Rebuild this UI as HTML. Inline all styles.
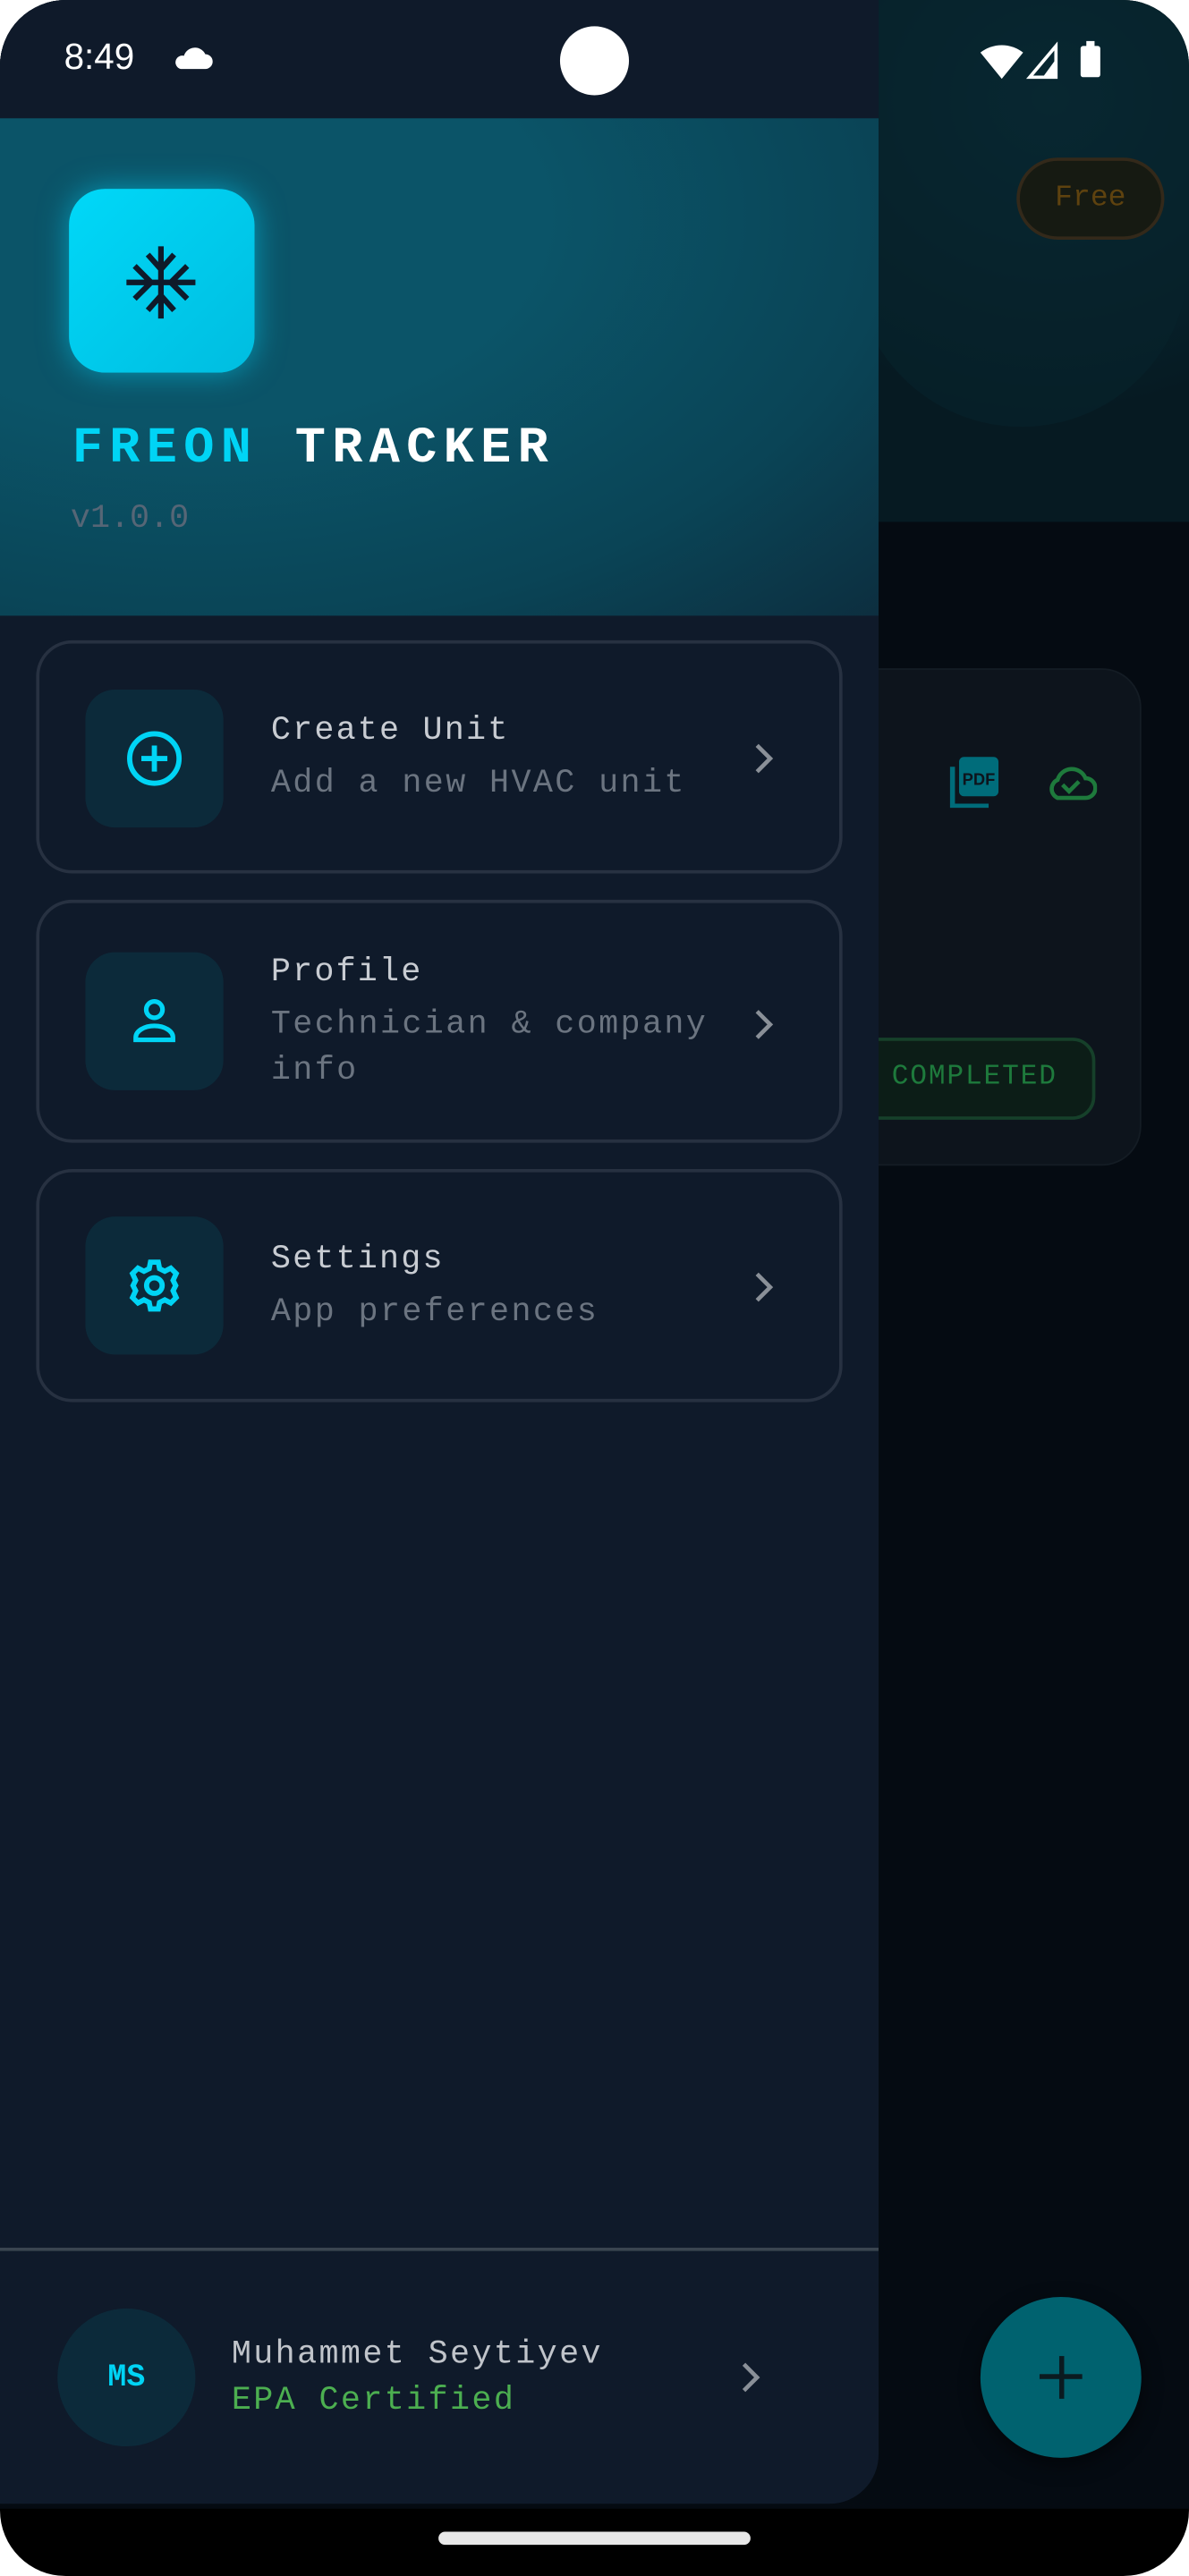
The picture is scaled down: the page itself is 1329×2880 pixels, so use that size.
<!DOCTYPE html>
<html><head><meta charset="utf-8"><style>
*{margin:0;padding:0;box-sizing:border-box}
html,body{width:1329px;height:2880px;background:#fff;overflow:hidden}
#s{position:absolute;left:0;top:0;width:724px;height:1569px;transform:scale(1.8356);transform-origin:0 0;background:#000;border-radius:40px;overflow:hidden;font-family:"Liberation Mono",monospace}
.a{position:absolute}
.card{position:absolute;left:22px;width:491px;border:2px solid #273141;border-radius:22px;background:#0f1a2a}
.ib{position:absolute;left:28px;width:84px;height:84px;border-radius:18px;background:#0c2a3a;display:flex;align-items:center;justify-content:center}
.t{position:absolute;left:141px;font-size:20px;color:#c8ccd2;letter-spacing:1.2px}
.st{position:absolute;left:141px;font-size:20px;color:#6b7480;letter-spacing:1.3px;line-height:28px}
.ch{position:absolute;left:433px}
</style></head><body>
<div id="s">
 <div class="a" style="left:0;top:0;width:724px;height:318px;background:radial-gradient(ellipse 260px 240px at 640px 60px,#0a3340,#061a22 80%)"></div>
 <div class="a" style="left:0;top:318px;width:724px;height:1210px;background:#050b12"></div>
 <div class="a" style="left:520px;top:0;width:204px;height:260px;border-radius:0 0 140px 140px;background:#07222b;opacity:.7"></div>
 <div class="a" style="left:619px;top:96px;width:90px;height:50px;border:2px solid #33291a;border-radius:25px;background:#161a12;color:#5e420f;font-size:18px;text-align:center;line-height:46px">Free</div>
 <div class="a" style="left:480px;top:407px;width:215px;height:303px;border-radius:24px;background:#0d141c;border:1px solid #141c24"></div>
 <svg class="a" style="left:578px;top:460px" width="32" height="32" viewBox="0 0 32 32"><rect x="6" y="1" width="24" height="24" rx="3" fill="#006c7a"/><path d="M2 7v24h22" stroke="#006c7a" stroke-width="3" fill="none"/><text x="18" y="18" font-size="10" font-weight="bold" text-anchor="middle" fill="#0d141c" font-family="Liberation Sans">PDF</text></svg>
 <svg class="a" style="left:636px;top:464px" width="32" height="26" viewBox="0 0 32 26"><path d="M8 22h17a6 6 0 0 0 0-12 9 9 0 0 0-17 1 6 6 0 0 0 0 11z" fill="none" stroke="#1e7a3c" stroke-width="2.5"/><path d="M11 14l4 4 6-6" fill="none" stroke="#1e7a3c" stroke-width="2.5"/></svg>
 <div class="a" style="left:500px;top:632px;width:167px;height:50px;border:2px solid #16402a;border-radius:14px;background:#0c1d17;color:#1e7a3c;font-size:17px;line-height:46px;padding-left:41px;letter-spacing:1px">COMPLETED</div>
 <div class="a" style="left:597px;top:1399px;width:98px;height:98px;border-radius:50%;background:#00626f;box-shadow:0 4px 12px rgba(0,0,0,.5)"></div>
 <div class="a" style="left:633px;top:1446px;width:26px;height:3px;background:#0b1a20"></div>
 <div class="a" style="left:645px;top:1435px;width:3px;height:26px;background:#0b1a20"></div>

 <div class="a" style="left:0;top:0;width:535px;height:1525px;background:#0f1a2a;border-radius:0 30px 30px 0;overflow:hidden">
  <div class="a" style="left:0;top:72px;width:535px;height:303px;background:radial-gradient(ellipse 700px 420px at 120px 60px,#0b5468 30%,#0a4456 60%,#0f1e2e 100%)"></div>
  <div class="a" style="left:42px;top:115px;width:113px;height:112px;border-radius:22px;background:linear-gradient(135deg,#00d8f8,#00bde0);box-shadow:0 0 18px rgba(0,210,245,.55)"></div>
  <svg class="a" style="left:74px;top:148px" width="48" height="48" viewBox="0 0 48 48" fill="none" stroke="#0f1a2a" stroke-width="3.4"><path d="M24 2v44M3 24h42M16 7l8 9 8-9M16 41l8-9 8 9M8 14l10 10-10 10M40 14L30 24l10 10"/></svg>
  <div class="a" style="left:44px;top:256px;font-size:31px;font-weight:bold;letter-spacing:4px;color:#fff;white-space:nowrap"><span style="color:#00d4f5">FREON</span> TRACKER</div>
  <div class="a" style="left:43px;top:305px;font-size:20px;color:#566676">v1.0.0</div>

  <div class="card" style="top:390px;height:142px">
   <div class="ib" style="top:28px"><svg width="38" height="38" viewBox="0 0 24 24"><circle cx="12" cy="12" r="9.5" fill="none" stroke="#00d4f5" stroke-width="2"/><path d="M12 7v10M7 12h10" stroke="#00d4f5" stroke-width="2"/></svg></div>
   <div class="t" style="top:42px">Create Unit</div>
   <div class="st" style="top:72px">Add a new HVAC unit</div>
   <svg class="ch" style="top:58px" width="16" height="24" viewBox="0 0 16 24"><path d="M4 4l8 8-8 8" fill="none" stroke="#8a9098" stroke-width="2.5"/></svg>
  </div>
  <div class="card" style="top:548px;height:148px">
   <div class="ib" style="top:30px"><svg width="34" height="34" viewBox="0 0 24 24"><circle cx="12" cy="7" r="3.5" fill="none" stroke="#00d4f5" stroke-width="2"/><path d="M4 20v-1a8 5 0 0 1 16 0v1z" fill="none" stroke="#00d4f5" stroke-width="2"/></svg></div>
   <div class="t" style="top:31px">Profile</div>
   <div class="st" style="top:61px">Technician &amp; company<br>info</div>
   <svg class="ch" style="top:62px" width="16" height="24" viewBox="0 0 16 24"><path d="M4 4l8 8-8 8" fill="none" stroke="#8a9098" stroke-width="2.5"/></svg>
  </div>
  <div class="card" style="top:712px;height:142px">
   <div class="ib" style="top:27px"><svg width="38" height="38" viewBox="0 0 24 24"><path fill="none" stroke="#00d4f5" stroke-width="2" d="M10.5 3h3l.5 2.5 2 1 2.3-1.2 2.1 2.1L19.2 10l1 2-1 2 1.2 2.6-2.1 2.1-2.3-1.2-2 1-.5 2.5h-3l-.5-2.5-2-1-2.3 1.2-2.1-2.1L4.8 14l-1-2 1-2-1.2-2.6 2.1-2.1L8 6.5l2-1z"/><circle cx="12" cy="12" r="3" fill="none" stroke="#00d4f5" stroke-width="2"/></svg></div>
   <div class="t" style="top:42px">Settings</div>
   <div class="st" style="top:72px">App preferences</div>
   <svg class="ch" style="top:58px" width="16" height="24" viewBox="0 0 16 24"><path d="M4 4l8 8-8 8" fill="none" stroke="#8a9098" stroke-width="2.5"/></svg>
  </div>

  <div class="a" style="left:0;top:1369px;width:535px;height:2px;background:#3a4550"></div>
  <div class="a" style="left:35px;top:1406px;width:84px;height:84px;border-radius:50%;background:#0c2a3a;color:#00d4f5;font-size:19px;font-weight:bold;text-align:center;line-height:84px">MS</div>
  <div class="a" style="left:141px;top:1423px;font-size:20px;color:#c0c4ca;letter-spacing:1.3px">Muhammet Seytiyev</div>
  <div class="a" style="left:141px;top:1451px;font-size:20px;color:#4caf50;letter-spacing:1.3px">EPA Certified</div>
  <svg class="a" style="left:449px;top:1436px" width="16" height="24" viewBox="0 0 16 24"><path d="M4 4l8 8-8 8" fill="none" stroke="#8a9098" stroke-width="2.5"/></svg>
 </div>

 <div class="a" style="left:0;top:0;width:535px;height:72px;background:#0f1a2a"></div>
 <div class="a" style="left:39px;top:22px;font-family:'Liberation Sans',sans-serif;font-size:22px;color:#fff">8:49</div>
 <svg class="a" style="left:104px;top:26px" width="26" height="18" viewBox="0 0 26 18"><path d="M6 16h15a4.5 4.5 0 0 0 0-9 7 7 0 0 0-13 1 4 4 0 0 0-2 8z" fill="#fff"/></svg>
 <div class="a" style="left:341px;top:16px;width:42px;height:42px;border-radius:50%;background:#fff"></div>
 <svg class="a" style="left:596px;top:24px" width="90" height="26" viewBox="0 0 90 26"><path d="M1 8a21 21 0 0 1 26 0L14 24z" fill="#fff"/><path d="M31 23L47 4v19z" fill="none" stroke="#fff" stroke-width="2"/><path d="M39 23h8V12z" fill="#fff"/><rect x="62" y="4" width="12" height="19" rx="1.5" fill="#fff"/><rect x="65.5" y="1" width="5" height="4" fill="#fff"/></svg>

 <div class="a" style="left:267px;top:1542px;width:190px;height:8px;border-radius:4px;background:#e8e8e8"></div>
</div>
</body></html>
